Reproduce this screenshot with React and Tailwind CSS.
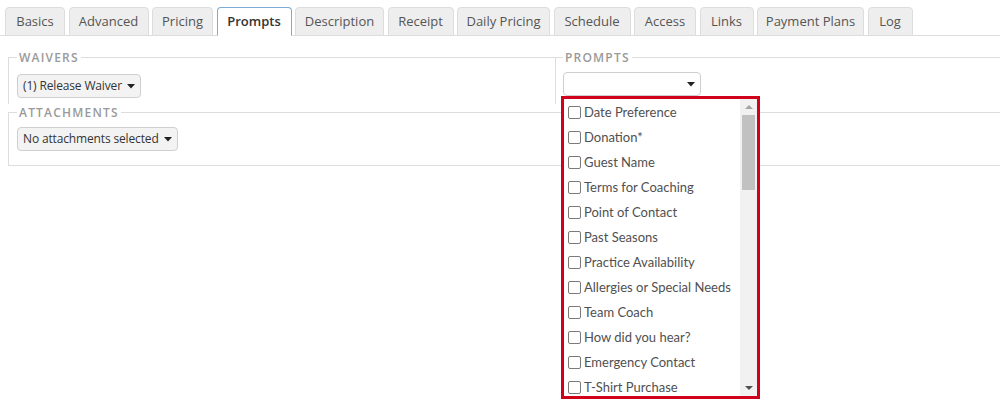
import React from "react";

const tabs = [
  { label: "Basics", w: "w-[60px]" },
  { label: "Advanced", w: "w-[80px]" },
  { label: "Pricing", w: "w-[61px]" },
  { label: "Prompts", w: "w-[75px]", active: true },
  { label: "Description", w: "w-[89px]" },
  { label: "Receipt", w: "w-[66px]" },
  { label: "Daily Pricing", w: "w-[93px]" },
  { label: "Schedule", w: "w-[77px]" },
  { label: "Access", w: "w-[62px]" },
  { label: "Links", w: "w-[54px]" },
  { label: "Payment Plans", w: "w-[107px]" },
  { label: "Log", w: "w-[45px]" },
];

const prompts = [
  "Date Preference",
  "Donation*",
  "Guest Name",
  "Terms for Coaching",
  "Point of Contact",
  "Past Seasons",
  "Practice Availability",
  "Allergies or Special Needs",
  "Team Coach",
  "How did you hear?",
  "Emergency Contact",
  "T-Shirt Purchase",
];

function Caret() {
  return (
    <svg width="8" height="5" viewBox="0 0 8 5" className="shrink-0">
      <path d="M0 0 L8 0 L4 4.5 Z" fill="#222" />
    </svg>
  );
}

function Legend({ children }) {
  return (
    <legend className="px-[2px] text-[12px] leading-[17px] font-semibold tracking-[1.2px] text-[#9a9a9a] uppercase">
      {children}
    </legend>
  );
}

function SelectButton({ children }) {
  return (
    <div className="inline-flex items-center gap-[5px] h-[24px] pl-[5px] pr-[5px] border border-[#cfcfcf] rounded-[4px] bg-[#f3f3f3] text-[12px] tracking-[-0.15px] text-[#333]">
      <span>{children}</span>
      <Caret />
    </div>
  );
}

function PromptList() {
  return (
    <div className="absolute left-[561px] top-[96px] w-[199px] h-[303px] border-[3px] border-[#d0021b] bg-white flex">
      <div className="flex-1 overflow-hidden pt-[1px] font-['Lato',sans-serif]">
        {prompts.map((p) => (
          <div key={p} className="h-[25px] flex items-center pl-[4px] text-[13px] text-[#505050] whitespace-nowrap">
            <span className="w-[13px] h-[13px] border border-[#7a7a7a] rounded-[2px] mr-[3px] shrink-0 bg-white" />
            {p}
          </div>
        ))}
      </div>
      <div className="w-[17px] bg-[#f1f1f1] flex flex-col">
        <div className="h-[16px] flex items-center justify-center">
          <svg width="8" height="4" viewBox="0 0 8 4">
            <path d="M0 4 L8 4 L4 0 Z" fill="#a3a3a3" />
          </svg>
        </div>
        <div className="mx-[2px] h-[75px] bg-[#c1c1c1]" />
        <div className="flex-1" />
        <div className="h-[16px] flex items-center justify-center">
          <svg width="8" height="4" viewBox="0 0 8 4">
            <path d="M0 0 L8 0 L4 4 Z" fill="#505050" />
          </svg>
        </div>
      </div>
    </div>
  );
}

export default function App() {
  return (
    <div className="relative w-[1000px] h-[405px] bg-white overflow-hidden font-['Open_Sans',sans-serif]">
      {/* tabs */}
      <div className="flex items-end gap-[3.5px] pl-[5px] pt-[7px] border-b border-[#dddddd]">
        {tabs.map((t) => (
          <div
            key={t.label}
            className={`${t.w} h-[29px] -mb-px flex items-center justify-center rounded-t-[4px] border text-[13px] ${
              t.active
                ? "bg-white border-[#7eaad6] border-b-white font-semibold text-[#333]"
                : "bg-[#eeeeee] border-[#dddddd] text-[#555]"
            }`}
          >
            {t.label}
          </div>
        ))}
      </div>

      <div className="flex mt-[13px]">
        <fieldset className="ml-[8px] w-[547px] border-t border-l border-[#dddddd] pl-[8px] pt-[6px] pb-[6px]">
          <Legend>Waivers</Legend>
          <SelectButton>(1) Release Waiver</SelectButton>
        </fieldset>
        <fieldset className="flex-1 border-t border-l border-[#dddddd] pl-[7px] pt-[6px] pb-[6px]">
          <Legend>Prompts</Legend>
          <div className="w-[138px] h-[24px] border border-[#cfcfcf] rounded-[4px] bg-white flex items-center justify-end pr-[5px]">
            <Caret />
          </div>
        </fieldset>
      </div>

      <fieldset className="ml-[8px] w-[992px] border-t border-l border-b border-[#dddddd] pl-[8px] pt-[4px] pb-[14px]">
        <Legend>Attachments</Legend>
        <SelectButton>No attachments selected</SelectButton>
      </fieldset>

      <PromptList />
    </div>
  );
}
